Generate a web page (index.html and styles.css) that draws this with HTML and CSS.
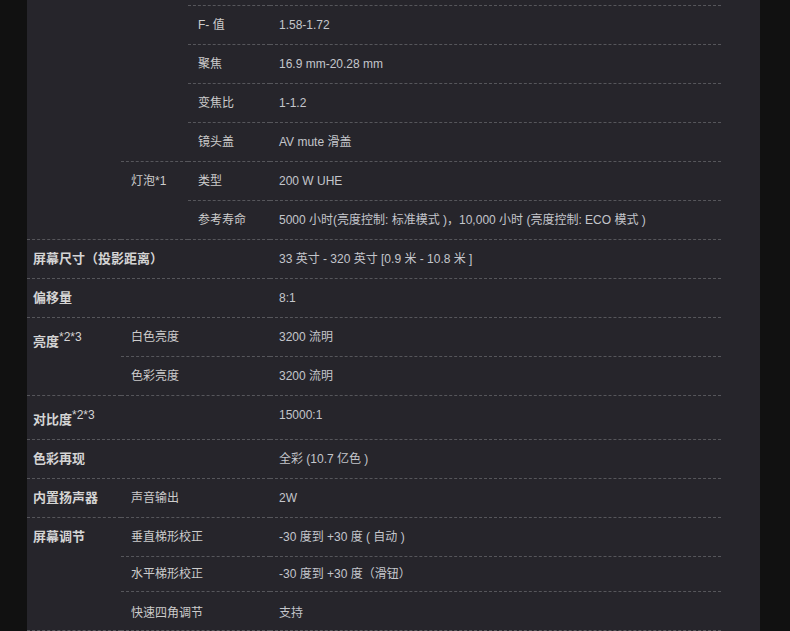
FILE: index.html
```html
<!DOCTYPE html>
<html lang="zh-CN">
<head>
  <meta charset="UTF-8">
  <meta name="viewport" content="width=device-width, initial-scale=1.0">
  <title>规格参数</title>
  <link rel="stylesheet" href="styles.css">
</head>
<body>
  <div class="panel">
    <table class="spec">
      <colgroup>
        <col class="c1">
        <col class="c2">
        <col class="c3">
        <col class="c4">
      </colgroup>
      <tr class="first">
        <th rowspan="6"></th>
        <td class="sub" rowspan="4"></td>
        <td class="sub">F- 值</td>
        <td class="val">1.58-1.72</td>
      </tr>
      <tr>
        <td class="sub">聚焦</td>
        <td class="val">16.9 mm-20.28 mm</td>
      </tr>
      <tr>
        <td class="sub">变焦比</td>
        <td class="val">1-1.2</td>
      </tr>
      <tr>
        <td class="sub">镜头盖</td>
        <td class="val">AV mute 滑盖</td>
      </tr>
      <tr>
        <td class="sub" rowspan="2">灯泡*1</td>
        <td class="sub">类型</td>
        <td class="val">200 W UHE</td>
      </tr>
      <tr>
        <td class="sub">参考寿命</td>
        <td class="val">5000 小时(亮度控制: 标准模式 )，10,000 小时 (亮度控制: ECO 模式 )</td>
      </tr>
      <tr>
        <th colspan="3">屏幕尺寸（投影距离）</th>
        <td class="val">33 英寸 - 320 英寸 [0.9 米 - 10.8 米 ]</td>
      </tr>
      <tr>
        <th colspan="3">偏移量</th>
        <td class="val">8:1</td>
      </tr>
      <tr>
        <th rowspan="2">亮度<sup>*2*3</sup></th>
        <td class="sub" colspan="2">白色亮度</td>
        <td class="val">3200 流明</td>
      </tr>
      <tr>
        <td class="sub" colspan="2">色彩亮度</td>
        <td class="val">3200 流明</td>
      </tr>
      <tr>
        <th colspan="3">对比度<sup>*2*3</sup></th>
        <td class="val">15000:1</td>
      </tr>
      <tr>
        <th colspan="3">色彩再现</th>
        <td class="val">全彩 (10.7 亿色 )</td>
      </tr>
      <tr>
        <th>内置扬声器</th>
        <td class="sub" colspan="2">声音输出</td>
        <td class="val">2W</td>
      </tr>
      <tr>
        <th rowspan="3">屏幕调节</th>
        <td class="sub" colspan="2">垂直梯形校正</td>
        <td class="val">-30 度到 +30 度 ( 自动 )</td>
      </tr>
      <tr class="tight">
        <td class="sub" colspan="2">水平梯形校正</td>
        <td class="val">-30 度到 +30 度（滑钮）</td>
      </tr>
      <tr class="low">
        <td class="sub" colspan="2">快速四角调节</td>
        <td class="val">支持</td>
      </tr>
    </table>
  </div>
</body>
</html>
```

FILE: styles.css
```css
* {
  margin: 0;
  padding: 0;
  box-sizing: content-box;
}
body {
  background: #111111;
  font-family: 'Liberation Sans', Arial, 'Noto Sans CJK SC', sans-serif;
  font-size: 12px;
  color: #c8c8c8;
  overflow: hidden;
}
.panel {
  width: 733px;
  margin-left: 27px;
  padding-top: 5px;
  background: #26252b;
}
.spec {
  width: 694px;
  border-collapse: separate;
  border-spacing: 0;
  table-layout: fixed;
}
.c1 { width: 94px; }
.c2 { width: 67px; }
.c3 { width: 82px; }
.spec th,
.spec td {
  height: 18px;
  line-height: 18px;
  padding: 10px 0 10px 10px;
  vertical-align: top;
  text-align: left;
  border-bottom: 1px dashed #56565b;
  white-space: nowrap;
}
.spec th {
  padding-left: 6px;
  font-size: 13px;
  font-weight: bold;
  color: #d4d4d4;
}
.spec td.sub {
  color: #cccccc;
}
.spec td.val {
  padding-left: 9px;
  color: #c4c6cb;
}
/* the group cells above continue past the top edge */
.spec tr.first td.sub:not([rowspan]),
.spec tr.first td.val {
  border-top: 1px dashed #56565b;
}
.spec sup {
  font-size: 12px;
  font-weight: normal;
  line-height: 18px;
  vertical-align: 5px;
}
.spec tr.tight td {
  padding-top: 8px;
  padding-bottom: 8px;
}
.spec tr.low td {
  padding-top: 12px;
  padding-bottom: 8px;
}
```
